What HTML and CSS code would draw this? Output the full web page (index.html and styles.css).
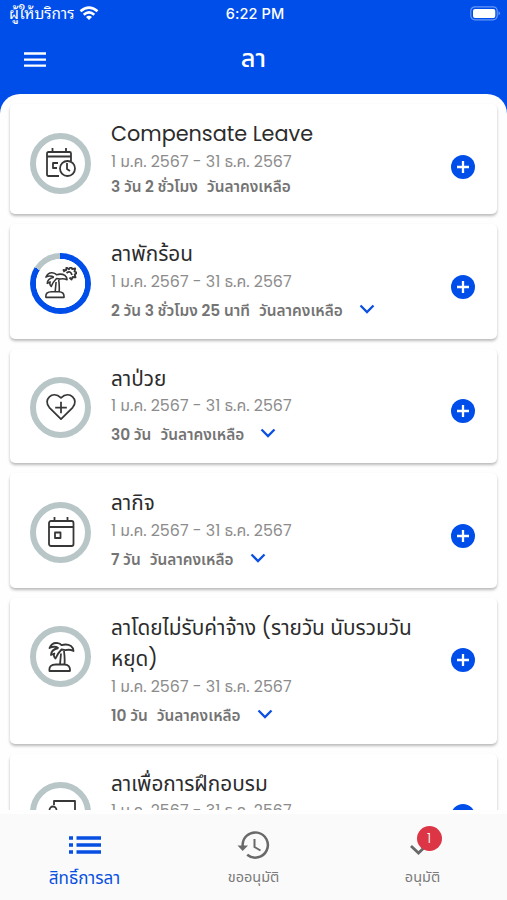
FILE: index.html
```html
<!DOCTYPE html>
<html lang="th">
<head>
<meta charset="utf-8">
<title>ลา</title>
<link rel="stylesheet" href="styles.css">
</head>
<body>
<svg class="defs" width="0" height="0">
  <symbol id="plus" viewBox="0 0 24 24"><circle cx="12" cy="12" r="12" fill="#004eea"/><path d="M12 6v12M6 12h12" stroke="#fff" stroke-width="2.3"/></symbol>
  <symbol id="chevron" viewBox="0 0 16 10"><path d="M1.5 1.5 8 8l6.500-6.500" fill="none" stroke="#0b50e3" stroke-width="2.300"/></symbol>
  <symbol id="palm" viewBox="0 0 32 32"><path d="M4.500 30q-1-6.500 6.500-6.500h8q6.500 0 6 6.500ZM15 23.500l1-11M19.500 23.500q.5-6-.5-13.500M13.500 7Q9 4.500 4.500 7 7 1 13 2.200q2 .3 3.500 2Q22 2.500 26 5q2.500 2 2.500 5-4-2-8-.8l-4-.7q-4 4-6 9Q8 15 9.300 12.500L6 14Q6 8.500 13.500 7"/></symbol>
</svg>
<header class="top">
  <div class="status">
    <span class="carrier"><span class="carrier-name">ผู้ให้บริการ</span>
      <svg width="20" height="15" viewBox="0 0 20 15"><g fill="none" stroke="#fff" stroke-width="2.600"><path d="M1.500 5.300q8.500-7.500 17 0"/><path d="M4.700 8.700q5.300-4.500 10.600 0"/></g><path d="M7 11q3-2.300 6 0l-3 3Z" fill="#fff"/></svg></span>
    <span class="clock">6:22 PM</span>
    <svg class="battery" width="31" height="15" viewBox="0 0 31 15"><rect x=".8" y=".8" width="26.400" height="13" rx="4" fill="none" stroke="#6797f6" stroke-width="1.200"/><rect x="3" y="3" width="22.300" height="9" rx="2" fill="#fff"/><path d="M28.500 5v4.500q3-2.200 0-4.500" fill="#6797f6"/></svg>
  </div>
  <div class="bar">
    <svg width="24" height="18" viewBox="0 0 24 18"><path d="M1 2.500h22M1 8.700h22M1 14.700h22" stroke="#fff" stroke-width="2.300"/></svg>
    <h1>ลา</h1>
  </div>
</header>
<main class="list">
  <article class="card first">
    <div class="ring"><svg class="icon" viewBox="0 0 32 32"><path d="M14 29H3.500q-1.500 0-1.500-1.500v-21Q2 5 3.500 5h21Q26 5 26 6.500V14M2 9.500h24M7.500 1v4M21 1v4M13 16H8v5h4"/><circle cx="22.500" cy="21.500" r="7.500"/><path d="M22 16v6l3 2"/></svg></div>
    <div class="info"><h2>Compensate Leave</h2><p class="date">1 ม.ค. 2567 - 31 ธ.ค. 2567</p><p class="left"><span class="amount"><b>3</b> วัน <b>2</b> ชั่วโมง</span><span class="label">วันลาคงเหลือ</span></p></div>
    <svg class="add"><use href="#plus"/></svg>
  </article>
  <article class="card">
    <div class="ring partial"><svg class="icon" viewBox="0 0 32 32"><g transform="translate(-3 4) scale(.88)"><use href="#palm" width="32" height="32"/></g><path d="m19.500 5-1-2 2.500.3.500-2.800 2.500 1.700L26-.5l1.200 2.700 3-.7-.7 3 2.500 1.300-2.300 1.700.8 2.800-2.800-.3-1.200 2.500-2-2M21.500 6q4-3 5.500 2"/></svg></div>
    <div class="info"><h2>ลาพักร้อน</h2><p class="date">1 ม.ค. 2567 - 31 ธ.ค. 2567</p><p class="left"><span class="amount"><b>2</b> วัน <b>3</b> ชั่วโมง <b>25</b> นาที</span><span class="label">วันลาคงเหลือ</span><svg class="more"><use href="#chevron"/></svg></p></div>
    <svg class="add"><use href="#plus"/></svg>
  </article>
  <article class="card">
    <div class="ring"><svg class="icon" viewBox="-.5 0 33 33"><path d="M16 28 4 16C-3 8 7-2 16 6c9-8 19 2 12 10ZM16 10v12M10 16h12"/></svg></div>
    <div class="info"><h2>ลาป่วย</h2><p class="date">1 ม.ค. 2567 - 31 ธ.ค. 2567</p><p class="left"><span class="amount"><b>30</b> วัน</span><span class="label">วันลาคงเหลือ</span><svg class="more"><use href="#chevron"/></svg></p></div>
    <svg class="add"><use href="#plus"/></svg>
  </article>
  <article class="card">
    <div class="ring"><svg class="icon" viewBox="0 0 32 32"><rect x="4" y="5" width="24.500" height="25" rx="2"/><path d="M4 11h24.500M9.500 1v4M22.500 1v4"/><rect x="10" y="16.500" width="5.500" height="5.500"/></svg></div>
    <div class="info"><h2>ลากิจ</h2><p class="date">1 ม.ค. 2567 - 31 ธ.ค. 2567</p><p class="left"><span class="amount"><b>7</b> วัน</span><span class="label">วันลาคงเหลือ</span><svg class="more"><use href="#chevron"/></svg></p></div>
    <svg class="add"><use href="#plus"/></svg>
  </article>
  <article class="card tall">
    <div class="ring"><svg class="icon" viewBox="0 0 32 32"><use href="#palm" width="32" height="32"/></svg></div>
    <div class="info"><h2>ลาโดยไม่รับค่าจ้าง (รายวัน นับรวมวัน<br>หยุด)</h2><p class="date">1 ม.ค. 2567 - 31 ธ.ค. 2567</p><p class="left"><span class="amount"><b>10</b> วัน</span><span class="label">วันลาคงเหลือ</span><svg class="more"><use href="#chevron"/></svg></p></div>
    <svg class="add"><use href="#plus"/></svg>
  </article>
  <article class="card">
    <div class="ring"><svg class="icon" viewBox="0 0 32 32"><path d="M9 8V4h21v18H18"/><circle cx="8" cy="13" r="3.500"/><path d="M2 29V20h12"/></svg></div>
    <div class="info"><h2>ลาเพื่อการฝึกอบรม</h2><p class="date">1 ม.ค. 2567 - 31 ธ.ค. 2567</p></div>
    <svg class="add"><use href="#plus"/></svg>
  </article>
</main>
<nav class="tabs">
  <a class="tab active"><svg width="34" height="32" viewBox="0 0 34 32"><path d="M1 9h4M8.500 9H33M1 16h4M8.500 16H33M1 23h4M8.500 23H33" stroke="#064fe2" stroke-width="3.500"/></svg><span>สิทธิ์การลา</span></a>
  <a class="tab"><svg width="32" height="32" viewBox="0 0 32 32"><path d="M4.700 17a12.600 12.600 0 1 1 4.500 8.700" fill="none" stroke="#696969" stroke-width="2.500"/><path d="M-.5 16.500h10.500L4.700 22Z" fill="#696969"/><path d="M16.500 10v8l6 3.500" fill="none" stroke="#696969" stroke-width="2"/></svg><span>ขออนุมัติ</span></a>
  <a class="tab"><span class="check"><svg width="32" height="32" viewBox="0 0 32 32"><path d="m4 17 7.500 7L25 11" fill="none" stroke="#696969" stroke-width="2.800"/></svg><i class="badge">1</i></span><span>อนุมัติ</span></a>
</nav>
</body>
</html>
```
FILE: styles.css
```css
* { box-sizing: border-box; margin: 0; padding: 0; }
body { width: 507px; height: 900px; overflow: hidden; display: flex; flex-direction: column; background: #004eea; font-family: Poppins, "Noto Sans Thai", "Noto Sans", sans-serif; color: #2c2c2c; }
.defs { display: block; flex: none; }
.top { height: 94px; flex: none; color: #fff; }
.status { height: 27px; padding: 0 6px 0 9px; display: grid; grid-template-columns: 1fr auto 1fr; align-items: center; }
.carrier { display: flex; align-items: center; gap: 5px; font-size: 15.300px; line-height: 20px; }
.carrier-name { font-family: "Noto Sans Thai Looped", Sarabun, Loma, sans-serif; white-space: nowrap; margin-top: -3px; }
.clock { font: 500 14.500px Inter, sans-serif; letter-spacing: .1px; }
.battery { justify-self: end; }
.bar { height: 65px; padding: 0 23px; display: grid; grid-template-columns: 24px 1fr 24px; align-items: center; }
.bar h1 { font-size: 25.500px; font-weight: 500; text-align: center; line-height: 40px; margin-top: -3px; }
.list { height: 716px; flex: none; overflow: hidden; background: #fefefe; border-radius: 20px 20px 0 0; padding: 10px 10px 0; display: flex; flex-direction: column; gap: 10px; }
.card { height: 114.500px; flex: none; display: flex; align-items: flex-start; padding: 0 22px 0 20px; border-radius: 5px; background: #fff; box-shadow: 0 2px 3px rgba(0,0,0,.27); }
.first { height: 110px; }
.tall { height: 146px; }
.ring { width: 61px; height: 61px; flex: none; margin: 28.500px 20px 0 0; border: 6px solid #b8c6c8; border-radius: 50%; display: grid; place-items: center; }
.partial { border: 0; background: radial-gradient(circle, #fff 24.300px, transparent 25px), conic-gradient(#004eea 84%, #b8c6c8 0); }
.icon { width: 32px; height: 32px; fill: none; stroke: #373737; stroke-width: 1.800; stroke-linejoin: round; }
.info { flex: 1; padding-top: 14px; white-space: nowrap; }
h2 { font-size: 20.750px; line-height: 31.500px; font-weight: 400; }
.date { font-size: 15.880px; line-height: 24px; color: #8c8c8c; }
.left { display: flex; align-items: center; height: 34px; font-size: 15.400px; font-weight: 600; color: #747474; }
.left b { font-weight: 600; }
.first .left { height: 26px; }
.label { margin-left: 9px; }
.more { width: 16px; height: 10px; margin: -4px 0 0 16px; }
.add { width: 24px; height: 24px; flex: none; margin-top: 50.500px; }
.tabs { height: 90px; flex: none; background: #fafafa; border-top: 4px solid #fefefe; display: grid; grid-template-columns: repeat(3, 1fr); }
.tab { display: flex; flex-direction: column; align-items: center; padding-top: 15px; color: #7a7a7a; font-size: 14.500px; line-height: 33px; }
.tab svg { display: block; overflow: visible; }
.active { color: #064fe2; font-size: 17px; line-height: 34px; }
.check { position: relative; width: 32px; height: 32px; }
.badge { position: absolute; left: 10px; top: -3px; width: 25px; height: 25px; border-radius: 50%; background: #dc3545; color: #fff; text-align: center; font: 300 14px/25px Poppins, Lato, sans-serif; }
```
